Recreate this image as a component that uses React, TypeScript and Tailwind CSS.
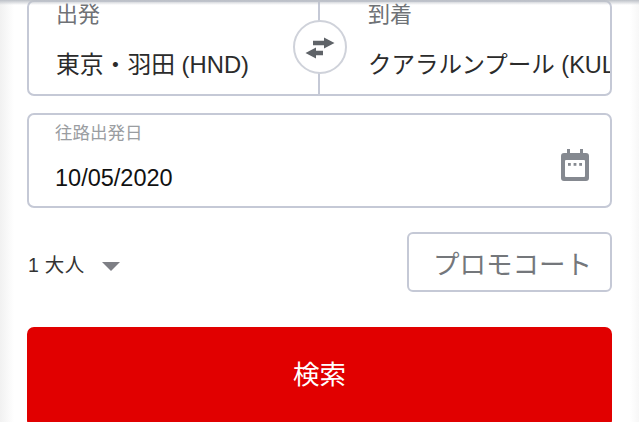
const font = "font-['Liberation_Sans','Noto_Sans_CJK_JP',sans-serif]";

function SwapIcon() {
  return (
    <svg width="30" height="24" viewBox="0 0 30 24" className="text-[#5f6368]" fill="currentColor">
      <path d="M19 2.500 L29.500 8 L19 13.500 V10.300 H8 V5.700 H19 Z" />
      <path d="M11 12.500 L0.500 18 L11 23.500 V20.300 H18 V15.700 H11 Z" />
    </svg>
  );
}

function CalendarIcon() {
  return (
    <svg width="28" height="32" viewBox="0 0 28 32" className="text-[#858990]" fill="currentColor">
      <path d="M6 0h3v4h10V0h3v4h3a3 3 0 0 1 3 3v22a3 3 0 0 1-3 3H3a3 3 0 0 1-3-3V7a3 3 0 0 1 3-3h3z" />
      <rect x="4" y="11" width="20" height="17" rx="1" fill="#fff" />
      <rect x="7" y="14" width="2.800" height="2.800" />
      <rect x="12.600" y="14" width="2.800" height="2.800" />
      <rect x="18.200" y="14" width="2.800" height="2.800" />
    </svg>
  );
}

export default function App() {
  return (
    <main className={`${font} relative h-[422px] w-[639px] overflow-hidden bg-white`}>
      {/* side gutters and the header's shadow */}
      <div className="absolute inset-y-0 left-0 w-[14px] bg-gradient-to-r from-[#f1f1f1] to-white" />
      <div className="absolute inset-y-0 right-0 w-[9px] bg-gradient-to-l from-[#f7f7f7] to-white" />
      <div className="absolute inset-x-0 top-0 z-10 h-[5px] bg-gradient-to-b from-[#bcc0c7] to-transparent" />

      <div className="relative ml-[27px] w-[585px]">
        <div className="relative flex h-[96px] rounded-[7px] border-2 border-[#c5c9d6]">
          <div className="w-[291px] border-r-2 border-[#c5c9d6] pl-[27px]">
            <div className="mt-[-2px] text-[22px] leading-[30px] text-[#6f7276]">出発</div>
            <div className="mt-[20px] text-[23.800px] leading-[30px] whitespace-nowrap text-[#2b2b2b]">東京・羽田 (HND)</div>
          </div>
          <div className="min-w-0 flex-1 overflow-hidden pl-[48px]">
            <div className="mt-[-2px] text-[22px] leading-[30px] text-[#6f7276]">到着</div>
            <div className="mt-[20px] text-[23.500px] leading-[30px] whitespace-nowrap text-[#2b2b2b]">クアラルンプール (KUL)</div>
          </div>
          <button className="absolute top-[18px] left-[264px] flex h-[54px] w-[54px] items-center justify-center rounded-full border-2 border-[#cfd2da] bg-white">
            <SwapIcon />
          </button>
        </div>

        <div className="mt-[17px] flex h-[95px] items-start justify-between rounded-[7px] border-2 border-[#c5c9d6] pr-[21px] pl-[26px]">
          <div>
            <div className="mt-[6px] text-[17.500px] leading-[24px] text-[#9a9da1]">往路出発日</div>
            <div className="mt-[18px] text-[23.500px] leading-[30px] text-[#111]">10/05/2020</div>
          </div>
          <div className="mt-[34px]">
            <CalendarIcon />
          </div>
        </div>

        <div className="mt-[24px] flex h-[60px] items-center justify-between">
          <div className="mt-[8px] flex items-center pl-[1px]">
            <span className="text-[19.500px] tracking-[0.3px] text-[#333]">1 大人</span>
            <span className="ml-[18px] h-0 w-0 border-x-[9px] border-t-[9px] border-x-transparent border-t-[#7e7f85]" />
          </div>
          <div className="flex h-[60px] w-[205px] items-center rounded-[6px] border-2 border-[#c5c9d6] pt-[8px] pl-[24px] text-[26.500px] whitespace-nowrap text-[#74777b]">
            プロモコート
          </div>
        </div>

        <button className="mt-[35px] flex h-[100px] w-full items-start justify-center rounded-[7px] bg-[#e10000] pt-[29px] text-[26.500px] leading-[38px] text-white">
          検索
        </button>
      </div>
    </main>
  );
}
